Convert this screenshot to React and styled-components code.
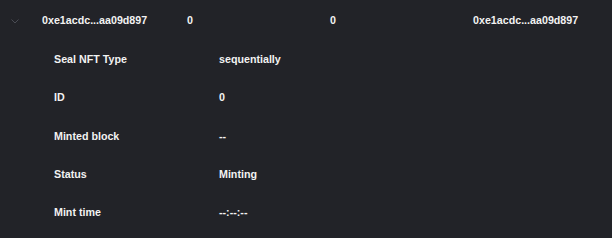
import React from "react";
import styled, { createGlobalStyle } from "styled-components";

const Global = createGlobalStyle`
  html, body { margin: 0; padding: 0; background: #222328; }
  body { font-family: "Liberation Sans", Arial, sans-serif; }
`;

const Wrap = styled.div`
  width: 612px;
  height: 238px;
  background: #222328;
  color: #f2f2f2;
  font-size: 10.7px;
  font-weight: 700;
  overflow: hidden;
`;

const Header = styled.div`
  display: grid;
  grid-template-columns: 42px 145px 143px 143px 1fr;
  align-items: center;
  height: 40px;
`;

const Chevron = styled.div`
  display: flex;
  justify-content: center;
  padding-left: 4px;
  justify-self: start;
  width: 22px;
  padding-top: 2px;
`;

const Details = styled.div`
  display: flex;
  flex-direction: column;
  padding-left: 54px;
`;

const Row = styled.div`
  display: grid;
  grid-template-columns: 165px 1fr;
  align-items: center;
  height: 38.3px;
`;

const Cell = styled.span`
  white-space: nowrap;
`;

const rows = [
  ["Seal NFT Type", "sequentially"],
  ["ID", "0"],
  ["Minted block", "--"],
  ["Status", "Minting"],
  ["Mint time", "--:--:--"],
];

export default function App() {
  return (
    <Wrap>
      <Global />
      <Header>
        <Chevron>
          <svg width="8" height="5" viewBox="0 0 8 5" fill="none">
            <path d="M0.5 0.5 L4 4 L7.5 0.5" stroke="#4a4c54" strokeWidth="1" />
          </svg>
        </Chevron>
        <Cell>0xe1acdc...aa09d897</Cell>
        <Cell>0</Cell>
        <Cell>0</Cell>
        <Cell>0xe1acdc...aa09d897</Cell>
      </Header>
      <Details>
        {rows.map(([k, v]) => (
          <Row key={k}>
            <Cell>{k}</Cell>
            <Cell>{v}</Cell>
          </Row>
        ))}
      </Details>
    </Wrap>
  );
}
